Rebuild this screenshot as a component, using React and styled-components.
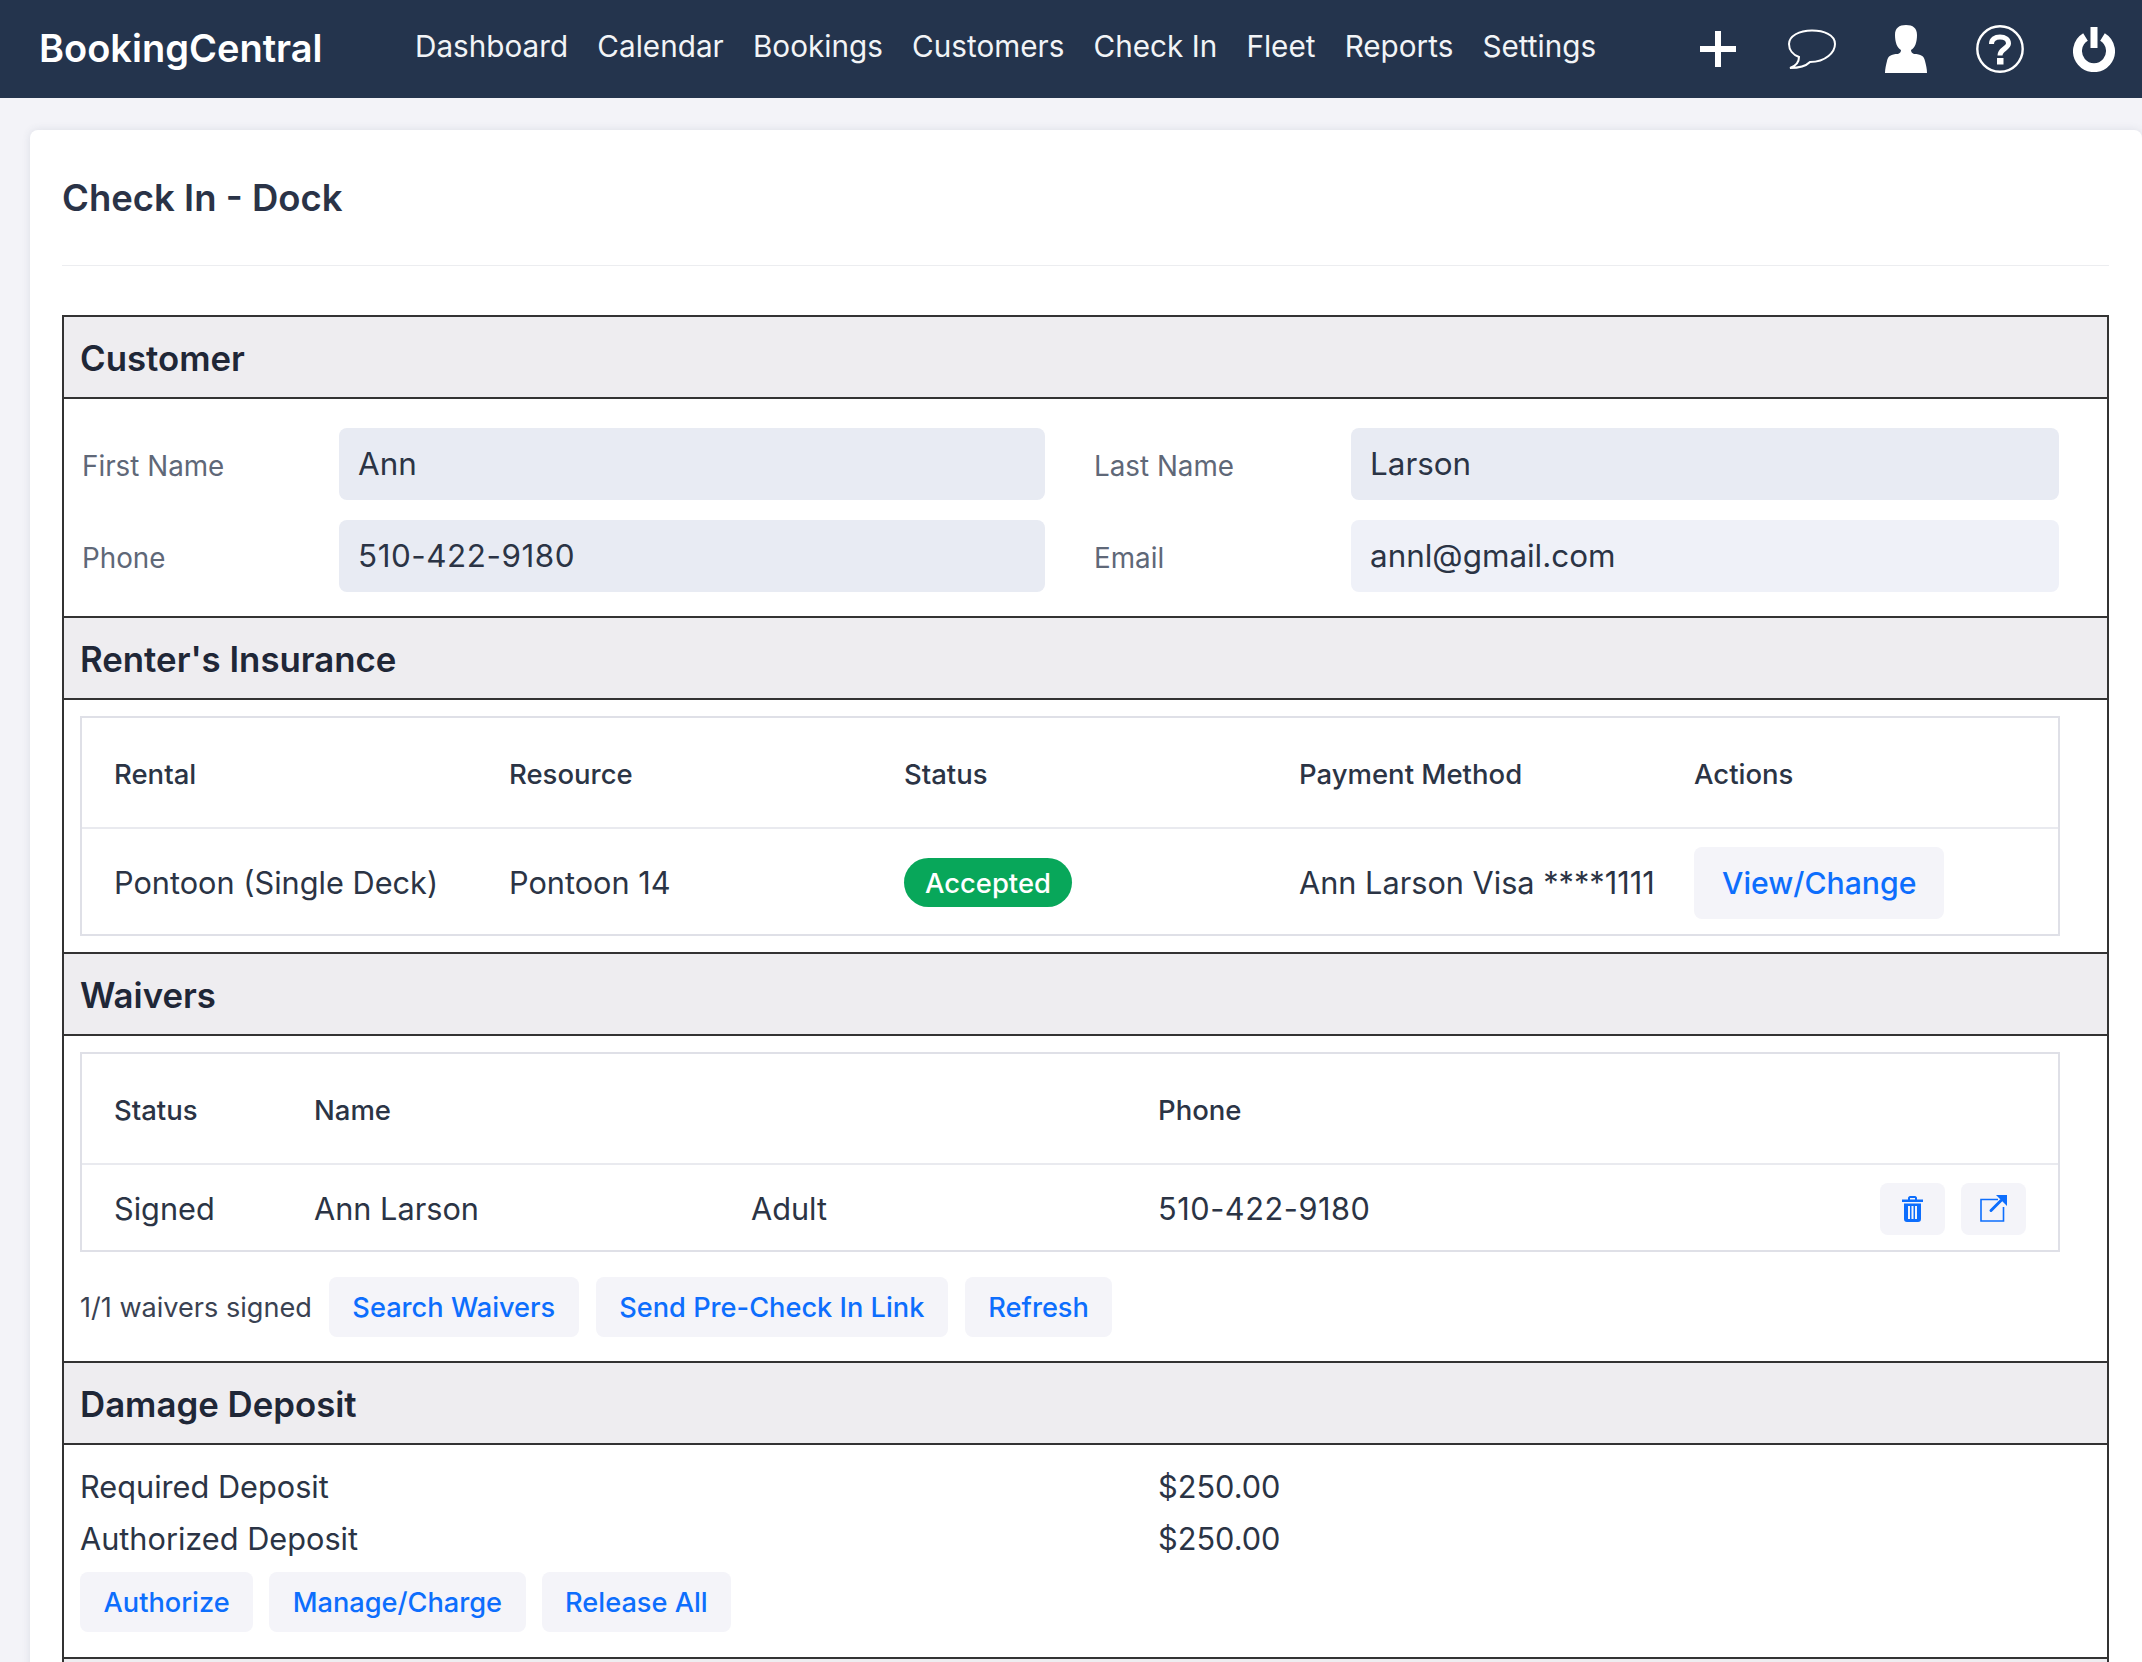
import React from 'react';
import styled, { createGlobalStyle } from 'styled-components';

const GlobalStyle = createGlobalStyle`
  html, body {
    margin: 0;
    height: 1662px;
    overflow: hidden;
    background: #f3f3f8;
    font-family: Inter, "Noto Sans", sans-serif;
    color: #2b3445;
  }
  * { box-sizing: border-box; }
`;

const NAV_ITEMS = ['Dashboard', 'Calendar', 'Bookings', 'Customers', 'Check In', 'Fleet', 'Reports', 'Settings'];

const PlusIcon = () => (
  <svg width="36" height="36" viewBox="0 0 36 36" fill="#fff">
    <rect x="15" y="0" width="6" height="36" />
    <rect x="0" y="15" width="36" height="6" />
  </svg>
);

const ChatIcon = () => (
  <svg width="48" height="40" viewBox="0 0 48 40" fill="none" stroke="#fff" strokeWidth="2">
    <path d="M24 1.5C36 1.5 47 6 47 15C47 23 38 33 22 33C19 36 12 39 2 39C8 37 11 34 11 28C5 26 1 21 1 15C1 7 11 1.5 24 1.5Z" />
  </svg>
);

const UserIcon = () => (
  <svg width="42" height="48" viewBox="0 0 42 48" fill="#fff">
    <path d="M21 0C28 0 32 3 32 10C32 17 30 23 26 25C26 27 27 28 29 29C36 29 39 31 40 36C41 40 42 44 42 48H0C0 44 1 40 2 36C3 31 6 29 13 29C15 28 16 27 16 25C12 23 10 17 10 10C10 3 14 0 21 0Z" />
  </svg>
);

const HelpIcon = () => (
  <svg width="48" height="48" viewBox="0 0 48 48" fill="none" stroke="#fff">
    <circle cx="24" cy="24" r="22.7" strokeWidth="2.4" />
    <path d="M15.5 19C15.5 14.5 19 12 24 12C29 12 32.5 14.5 32.5 18.5C32.5 23.5 24 24 24 30.5" strokeWidth="5" />
    <rect x="21" y="33" width="6.5" height="6.5" fill="#fff" stroke="none" />
  </svg>
);

const PowerIcon = () => (
  <svg width="42" height="45" viewBox="0 0 42 45" fill="none">
    <path d="M12.5 10A16.5 16.5 0 1 0 29.5 10" stroke="#fff" strokeWidth="9" />
    <rect x="17.5" y="0" width="7" height="21" fill="#fff" />
  </svg>
);

const TrashIcon = () => (
  <svg width="21" height="26" viewBox="0 0 21 26" fill="#0d6efd">
    <path d="M6 3.5V2C6 1 7 0 8 0H13C14 0 15 1 15 2V3.5H21V6H0V3.5ZM8 3.5H13V2H8Z" fillRule="evenodd" />
    <path d="M2 7.5H19V23C19 25 18 26 16 26H5C3 26 2 25 2 23ZM6 10V23H8V10ZM9.5 10V23H11.5V10ZM13 10V23H15V10Z" fillRule="evenodd" />
  </svg>
);

const ExternalIcon = () => (
  <svg width="27" height="27" viewBox="0 0 27 27" fill="none">
    <path d="M18 4.5H1V26H23.5V12" stroke="#0d6efd" strokeWidth="1.6" />
    <path d="M11 15.5L21 5.5" stroke="#0d6efd" strokeWidth="3" strokeLinecap="round" />
    <path d="M16 0H27V11Z" fill="#0d6efd" />
  </svg>
);

const App = () => (
  <>
    <GlobalStyle />
    <Nav>
      <Brand>BookingCentral</Brand>
      <NavLinks>
        {NAV_ITEMS.map((item) => (
          <NavLink key={item}>{item}</NavLink>
        ))}
      </NavLinks>
      <NavIcons>
        <NavIcon><PlusIcon /></NavIcon>
        <NavIcon><ChatIcon /></NavIcon>
        <NavIcon><UserIcon /></NavIcon>
        <NavIcon><HelpIcon /></NavIcon>
        <NavIcon><PowerIcon /></NavIcon>
      </NavIcons>
    </Nav>

    <Card>
      <PageTitle>Check In - Dock</PageTitle>
      <Panel>
        <SectionHead>Customer</SectionHead>
        <FormGrid>
          <FieldLabel>First Name</FieldLabel>
          <Field>Ann</Field>
          <FieldLabel>Last Name</FieldLabel>
          <Field>Larson</Field>
          <FieldLabel>Phone</FieldLabel>
          <Field><PhoneNumber>510-422-9180</PhoneNumber></Field>
          <FieldLabel>Email</FieldLabel>
          <Field $light>annl@gmail.com</Field>
        </FormGrid>

        <SectionHead>Renter's Insurance</SectionHead>
        <TableWrap>
          <Table>
            <HeadRow $cols="repeat(5, 395px)">
              <span>Rental</span>
              <span>Resource</span>
              <span>Status</span>
              <span>Payment Method</span>
              <span>Actions</span>
            </HeadRow>
            <BodyRow $cols="repeat(5, 395px)" $height={105}>
              <span>Pontoon (Single Deck)</span>
              <span>Pontoon 14</span>
              <span><Badge>Accepted</Badge></span>
              <span>Ann Larson Visa ****1111</span>
              <span><ViewButton>View/Change</ViewButton></span>
            </BodyRow>
          </Table>
        </TableWrap>

        <SectionHead>Waivers</SectionHead>
        <TableWrap>
          <Table>
            <HeadRow $cols="200px 437px 407px 1fr">
              <span>Status</span>
              <span>Name</span>
              <span />
              <span>Phone</span>
            </HeadRow>
            <BodyRow $cols="200px 437px 407px 1fr auto" $height={85}>
              <span>Signed</span>
              <span>Ann Larson</span>
              <span>Adult</span>
              <PhoneNumber>510-422-9180</PhoneNumber>
              <RowActions>
                <IconButton><TrashIcon /></IconButton>
                <IconButton><ExternalIcon /></IconButton>
              </RowActions>
            </BodyRow>
          </Table>
        </TableWrap>
        <ButtonRow>
          <SignedNote>1/1 waivers signed</SignedNote>
          <Button>Search Waivers</Button>
          <Button>Send Pre-Check In Link</Button>
          <Button>Refresh</Button>
        </ButtonRow>

        <SectionHead>Damage Deposit</SectionHead>
        <DepositBody>
          <DepositLine>
            <span>Required Deposit</span>
            <span>$250.00</span>
          </DepositLine>
          <DepositLine>
            <span>Authorized Deposit</span>
            <span>$250.00</span>
          </DepositLine>
          <DepositButtons>
            <Button>Authorize</Button>
            <Button>Manage/Charge</Button>
            <Button>Release All</Button>
          </DepositButtons>
        </DepositBody>

        <SectionHead />
      </Panel>
    </Card>
  </>
);

export default App;

const Nav = styled.header`
  height: 98px;
  background: #24344d;
  display: flex;
  align-items: center;
  padding: 0 24px 0 39px;
  color: #fff;
`;

const Brand = styled.div`
  font-size: 38px;
  font-weight: 600;
  width: 376px;
  padding-bottom: 2px;
`;

const NavLinks = styled.nav`
  display: flex;
  gap: 29.2px;
  flex: 1;
  padding-bottom: 7px;
`;

const NavLink = styled.a`
  font-size: 29.7px;
  color: #f2f4f7;
`;

const NavIcons = styled.div`
  display: flex;
  gap: 46px;
  align-items: center;
`;

const NavIcon = styled.div`
  width: 48px;
  height: 48px;
  display: flex;
  align-items: center;
  justify-content: center;
`;

const Card = styled.main`
  margin: 32px 0 0 30px;
  background: #fff;
  border-radius: 8px 8px 0 0;
  box-shadow: 0 0 8px rgba(60, 70, 100, 0.12);
  padding: 0 33px 0 32px;
`;

const PageTitle = styled.h1`
  margin: 0 0 49px;
  height: 136px;
  display: flex;
  align-items: center;
  font-size: 36.5px;
  font-weight: 600;
  color: #2a3347;
  border-bottom: 1.5px solid #ecedf0;
`;

const Panel = styled.section`
  border: 2px solid #333;
  border-bottom: 0;
`;

const SectionHead = styled.h2`
  margin: 0;
  height: 84px;
  display: flex;
  align-items: center;
  padding: 2px 0 0 16px;
  background: #eeedf0;
  border-bottom: 2px solid #333;
  font-size: 34.8px;
  font-weight: 600;
  color: #1f2737;
  border-top: 2px solid #333;

  &:first-child {
    border-top: 0;
    height: 82px;
  }
`;

const FormGrid = styled.div`
  display: grid;
  grid-template-columns: 257px 706px 306px 708px;
  row-gap: 20px;
  align-items: center;
  padding: 29px 0 24px 18px;
`;

const FieldLabel = styled.label`
  font-size: 27.8px;
  color: #5f6878;
  padding-top: 3px;
  &:nth-child(4n + 3) {
    padding-left: 49px;
  }
`;

const Field = styled.div`
  height: 72px;
  display: flex;
  align-items: center;
  padding: 0 19px;
  border-radius: 8px;
  background: ${(p) => (p.$light ? '#eff1f8' : '#e8ebf3')};
  font-size: 31.4px;
  color: #2b3445;
`;

const PhoneNumber = styled.span`
  letter-spacing: 0.55px;
`;

const TableWrap = styled.div`
  padding: 16px 47px 16px 16px;
`;

const Table = styled.div`
  border: 2px solid #dfe0e7;
  color: #2b3445;
`;

const HeadRow = styled.div`
  display: grid;
  grid-template-columns: ${(p) => p.$cols};
  align-items: center;
  height: 111px;
  padding: 2px 0 0 32px;
  border-bottom: 2px solid #e9eaef;
  font-size: 27.5px;
  font-weight: 500;
`;

const BodyRow = styled.div`
  display: grid;
  grid-template-columns: ${(p) => p.$cols};
  align-items: center;
  height: ${(p) => p.$height}px;
  padding: 2px 32px 0;
  font-size: 30.7px;
  white-space: nowrap;
`;

const Badge = styled.span`
  display: inline-flex;
  align-items: center;
  height: 49px;
  padding: 0 21px;
  border-radius: 25px;
  background: #08a75a;
  color: #fff;
  font-size: 27.4px;
  font-weight: 500;
`;

const ViewButton = styled.button`
  height: 72px;
  padding: 0 28px;
  border: 0;
  border-radius: 8px;
  background: #f4f4f9;
  color: #0d6efd;
  font: 500 30.2px Inter, sans-serif;
`;

const RowActions = styled.div`
  display: flex;
  gap: 16px;
  justify-self: end;
`;

const IconButton = styled.button`
  width: 65px;
  height: 52px;
  padding: 0;
  border: 0;
  border-radius: 8px;
  background: #f4f4f9;
  display: flex;
  align-items: center;
  justify-content: center;
`;

const ButtonRow = styled.div`
  display: flex;
  align-items: center;
  gap: 17px;
  padding: 9px 16px 24px;
`;

const SignedNote = styled.span`
  font-size: 27.1px;
  color: #3a4252;
`;

const Button = styled.button`
  height: 60px;
  padding: 0 23.5px;
  border: 0;
  border-radius: 8px;
  background: #f4f4f9;
  color: #0d6efd;
  font: 500 27.2px Inter, sans-serif;
`;

const DepositBody = styled.div`
  padding: 15px 16px 25px;
`;

const DepositLine = styled.div`
  display: grid;
  grid-template-columns: 1078px 1fr;
  align-items: center;
  height: 52px;
  font-size: 30.7px;
  color: #2b3445;
`;

const DepositButtons = styled.div`
  display: flex;
  gap: 16px;
  margin-top: 8px;
`;
